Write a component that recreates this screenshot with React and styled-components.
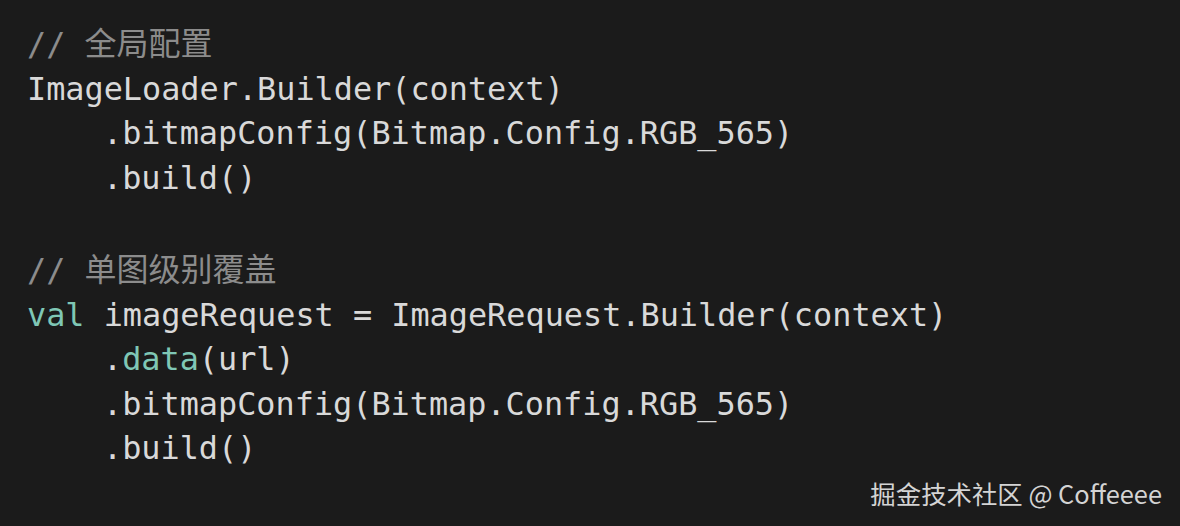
import styled, { createGlobalStyle } from "styled-components";

const GlobalStyle = createGlobalStyle`
  html, body {
    margin: 0;
    padding: 0;
    background: #1b1b1b;
  }
`;

const Page = styled.div`
  position: relative;
  width: 1180px;
  height: 526px;
  overflow: hidden;
  background: #1b1b1b;
`;

const Code = styled.pre`
  margin: 0;
  padding: 19px 0 0 27px;
  font-family: "DejaVu Sans Mono", "Liberation Mono", "Noto Sans CJK SC", monospace;
  font-size: 31.85px;
  line-height: 44.6px;
  color: #d9d9d9;
`;

const Line = styled.div`
  min-height: 44.6px;
  white-space: pre;
  padding-left: ${(p) => (p.indent ? "76px" : "0")};
`;

const Comment = styled.span`
  color: #8c8c8c;

  .cjk {
    font-family: "Noto Sans CJK SC", sans-serif;
    font-size: 32px;
  }
`;

const Keyword = styled.span`
  color: #7fc7b5;
`;

const Watermark = styled.div`
  position: absolute;
  right: 18px;
  bottom: 15px;
  font-family: "Noto Sans CJK SC", "Noto Sans", sans-serif;
  font-size: 25.4px;
  color: #d4d4d4;
`;

const App = () => {
  return (
    <Page>
      <GlobalStyle />
      <Code>
        <Line>
          <Comment>
            // <span className="cjk">全局配置</span>
          </Comment>
        </Line>
        <Line>ImageLoader.Builder(context)</Line>
        <Line indent>.bitmapConfig(Bitmap.Config.RGB_565)</Line>
        <Line indent>.build()</Line>
        <Line />
        <Line>
          <Comment>
            // <span className="cjk">单图级别覆盖</span>
          </Comment>
        </Line>
        <Line>
          <Keyword>val</Keyword> imageRequest = ImageRequest.Builder(context)
        </Line>
        <Line indent>
          .<Keyword>data</Keyword>(url)
        </Line>
        <Line indent>.bitmapConfig(Bitmap.Config.RGB_565)</Line>
        <Line indent>.build()</Line>
      </Code>
      <Watermark>掘金技术社区 @ Coffeeee</Watermark>
    </Page>
  );
};

export default App;
